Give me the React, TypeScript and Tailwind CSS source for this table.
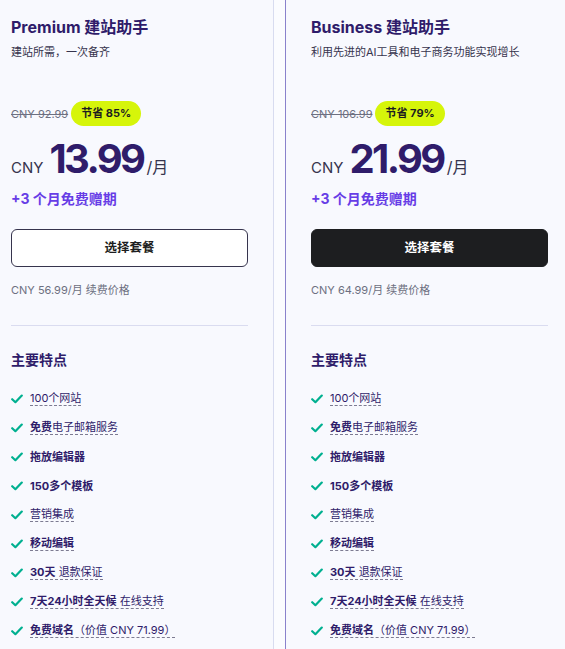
import React from "react";

type Part = { t: string; b?: boolean };
type Feature = { parts: Part[]; dashed: boolean };

const features: Feature[] = [
  { parts: [{ t: "100个网站" }], dashed: true },
  { parts: [{ t: "免费", b: true }, { t: "电子邮箱服务" }], dashed: true },
  { parts: [{ t: "拖放编辑器", b: true }], dashed: false },
  { parts: [{ t: "150多个模板", b: true }], dashed: false },
  { parts: [{ t: "营销集成" }], dashed: true },
  { parts: [{ t: "移动编辑", b: true }], dashed: true },
  { parts: [{ t: "30天", b: true }, { t: " 退款保证" }], dashed: true },
  { parts: [{ t: "7天24小时全天候", b: true }, { t: " 在线支持" }], dashed: true },
  { parts: [{ t: "免费域名", b: true }, { t: "（价值 CNY 71.99）" }], dashed: true },
];

const Check = () => (
  <svg width="12" height="10" viewBox="0 0 12 10" className="shrink-0">
    <path d="M1.2 5.2 L4.4 8.2 L10.8 1.6" fill="none" stroke="#00b090" strokeWidth="2.2" strokeLinecap="round" strokeLinejoin="round" />
  </svg>
);

type Plan = {
  name: string;
  sub: string;
  old: string;
  save: string;
  price: string;
  renew: string;
  dark: boolean;
  border: string;
};

const Card = ({ p }: { p: Plan }) => (
  <div
    className={`w-[289px] shrink-0 border-x px-[25px] pt-[15px] bg-[#f8f9fe] ${p.border}`}
  >
    <div className="text-[16px] leading-[24px] font-bold text-[#2f1c6a]">{p.name}</div>
    <div className="mt-[5px] text-[11px] leading-[16px] text-[#36344d]">{p.sub}</div>
    <div className="mt-[41px] flex items-center h-[25px]">
      <span className="text-[11px] leading-[16px] text-[#6d7081] line-through">{p.old}</span>
      <span className="ml-[3px] h-[25px] px-[10px] rounded-full bg-[#d6f50a] flex items-center text-[11px] font-bold text-[#1d1e20]">
        {p.save}
      </span>
    </div>
    <div className="mt-[13px] flex items-baseline h-[40px] leading-[40px] text-[#2f1c6a]">
      <span className="text-[15px] text-[#36344d]">CNY</span>
      <span className="ml-[6px] text-[40px] font-bold tracking-[-0.065em]">{p.price}</span>
      <span className="ml-[3px] text-[16px] text-[#36344d]">/月</span>
    </div>
    <div className="mt-[10px] text-[14px] leading-[20px] font-bold text-[#673de6]">+3 个月免费赠期</div>
    <button
      className={`mt-[20px] w-full h-[38px] rounded-[6px] text-[12.5px] font-bold flex items-center justify-center ${
        p.dark
          ? "bg-[#1d1e20] text-white border border-[#1d1e20]"
          : "bg-white text-[#1d1e20] border border-[#36344d]"
      }`}
    >
      选择套餐
    </button>
    <div className="mt-[15px] text-[11px] leading-[16px] text-[#6d7081]">{p.renew}</div>
    <div className="mt-[27px] h-px bg-[#dadcf0]" />
    <div className="mt-[24px] text-[14px] leading-[20px] font-bold text-[#2f1c6a]">主要特点</div>
    <div className="mt-[14px] flex flex-col">
      {features.map((f, i) => (
        <div key={i} className="h-[29px] flex items-center gap-[7px]">
          <Check />
          <span
            className={`text-[11px] leading-[14px] text-[#2f1c6a] ${
              f.dashed ? "border-b border-dashed border-[#7d7b92]" : ""
            }`}
          >
            {f.parts.map((pt, j) => (
              <span key={j} className={pt.b ? "font-bold" : "font-normal"}>
                {pt.t}
              </span>
            ))}
          </span>
        </div>
      ))}
    </div>
  </div>
);

const plans: Plan[] = [
  {
    name: "Premium 建站助手",
    sub: "建站所需，一次备齐",
    old: "CNY 92.99",
    save: "节省 85%",
    price: "13.99",
    renew: "CNY 56.99/月 续费价格",
    dark: false,
    border: "border-[#d8dcf0]",
  },
  {
    name: "Business 建站助手",
    sub: "利用先进的AI工具和电子商务功能实现增长",
    old: "CNY 106.99",
    save: "节省 79%",
    price: "21.99",
    renew: "CNY 64.99/月 续费价格",
    dark: true,
    border: "border-[#8a82cc]",
  },
];

export default function App() {
  return (
    <div
      className="w-[565px] h-[649px] overflow-hidden bg-[#fbfcff]"
      style={{ fontFamily: 'Inter, "Noto Sans CJK SC", sans-serif' }}
    >
      <div className="flex gap-[11px] ml-[-15px] h-full">
        {plans.map((p, i) => (
          <Card key={i} p={p} />
        ))}
      </div>
    </div>
  );
}
